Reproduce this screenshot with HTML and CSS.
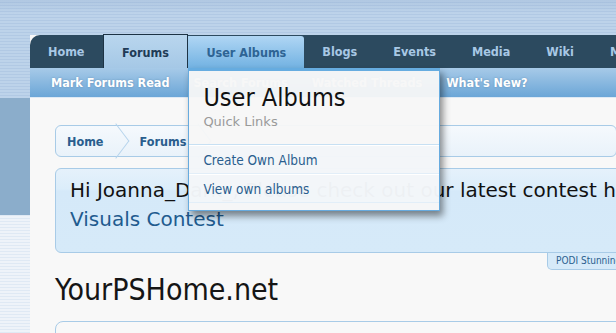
FILE: index.html
```html
<!DOCTYPE html>
<html lang="en">
<head>
  <meta charset="UTF-8">
  <title>YourPSHome.net</title>
  <link rel="stylesheet" href="styles.css">
</head>
<body>
  <div class="page">
    <!-- main navigation -->
    <nav class="nav-tabs">
      <a href="#" class="tab">Home</a>
      <a href="#" class="tab tab-selected">Forums</a>
      <div class="tab tab-hover">
        <a href="#" class="tab-link">User Albums</a>
        <div class="menu">
          <div class="menu-head">
            <h3>User Albums</h3>
            <p>Quick Links</p>
          </div>
          <ul class="menu-list">
            <li><a href="#">Create Own Album</a></li>
            <li><a href="#">View own albums</a></li>
          </ul>
        </div>
      </div>
      <a href="#" class="tab">Blogs</a>
      <a href="#" class="tab">Events</a>
      <a href="#" class="tab">Media</a>
      <a href="#" class="tab">Wiki</a>
      <a href="#" class="tab">Members</a>
    </nav>

    <div class="sub-nav">
      <a href="#">Mark Forums Read</a>
      <a href="#">Search Forums</a>
      <a href="#">Watched Threads</a>
      <a href="#">What's New?</a>
    </div>

    <div class="content">
      <div class="breadcrumb">
        <a href="#" class="crumb">Home</a>
        <span class="crumb-arrow"></span>
        <a href="#" class="crumb">Forums</a>
        <span class="crumb-arrow"></span>
      </div>

      <div class="notice">
        <p>Hi Joanna_Dark_, Please check out our latest contest here</p>
        <a href="#">Visuals Contest</a>
      </div>
      <div class="notice-tab">PODI Stunning Visuals Contest</div>

      <h1 class="site-title">YourPSHome.net</h1>

      <div class="node-box"></div>
    </div>
  </div>
</body>
</html>
```

FILE: styles.css
```css
/* page */
body {
  margin: 0;
  height: 333px;
  overflow: hidden;
  font-family: "DejaVu Sans", Verdana, sans-serif;
  font-stretch: condensed;
  background:
    linear-gradient(#8badcb, #8badcb) no-repeat 0 98px / 30px 117px,
    repeating-linear-gradient(#dfe9f4 0 1px, #eef3f9 1px 3px) no-repeat 0 215px / 30px 200px,
    linear-gradient(rgba(120, 150, 190, 0.18), rgba(120, 150, 190, 0) 14px),
    repeating-linear-gradient(#bdd3ea 0 2px, #b1c9e4 2px 3px);
}

a {
  text-decoration: none;
}

.page {
  margin: 35px 0 0 30px;
  width: 1000px;
  background-color: #f8f8f8;
  min-height: 400px;
}

/* top tabs */
.nav-tabs {
  display: flex;
  height: 33px;
  background-color: #2c4a5f;
  border-top-left-radius: 10px;
}

.tab {
  display: flex;
  align-items: center;
  padding: 0 18px;
  font-size: 12.5px;
  font-weight: bold;
  color: #a8c8e5;
  position: relative;
}

.tab-selected {
  color: #1f3b56;
  background: linear-gradient(#b9d6ee, #a5c8e6);
  margin-top: -1px;
  border: 1px solid #1d3345;
  border-bottom: none;
  padding: 1px 18.5px 0;
}

.tab-hover {
  margin-top: 1px;
  background: linear-gradient(#b0d6f4, #72b2e2);
  border-top-right-radius: 3px;
}

.tab-link {
  color: #2e6494;
}

/* dropdown menu */
.menu {
  position: absolute;
  top: 100%;
  left: 0;
  width: 250px;
  height: 139px;
  border: 1px solid #67abdf;
  border-top: 3px solid #66ace0;
  background-color: rgba(247, 247, 247, 0.95);
  box-shadow: 3px 5px 7px rgba(0, 0, 0, 0.45);
  z-index: 10;
  font-weight: normal;
}

.menu-head {
  padding: 12px 14px 0;
  height: 61px;
  border-bottom: 1px solid #c7e0f3;
}

.menu-head h3 {
  margin: 0;
  font-size: 25px;
  font-weight: normal;
  color: #111;
  line-height: 30px;
}

.menu-head p {
  margin: 0;
  font-size: 13px;
  font-stretch: normal;
  color: #9a9a9a;
  line-height: 17px;
}

.menu-list {
  list-style: none;
  margin: 0;
  padding: 0;
  background-color: rgba(240, 246, 252, 0.5);
}

.menu-list li {
  border-top: 1px solid #fff;
  border-bottom: 1px solid #e2eef8;
  height: 27px;
  display: flex;
  align-items: center;
  padding: 0 14px;
}

.menu-list a {
  font-size: 13.5px;
  color: #2a5e8e;
}

/* secondary bar */
.sub-nav {
  display: flex;
  align-items: center;
  height: 29px;
  padding-left: 9px;
  background: linear-gradient(#a7cae8, #6ba6d7);
  border-bottom: 1px solid #dde9f4;
}

.sub-nav a {
  color: #fff;
  font-size: 12.5px;
  font-weight: bold;
  padding: 0 12px;
  text-shadow: 0 0 2px rgba(40, 80, 120, 0.4);
}

/* content */
.content {
  padding: 27px 25px 0;
}

.breadcrumb {
  display: flex;
  align-items: center;
  height: 30px;
  width: 560px;
  border: 1px solid #a8cbe7;
  border-radius: 6px;
  background: linear-gradient(#f5f9fd, #e9f2fa);
}

.crumb {
  font-size: 12.5px;
  font-weight: bold;
  color: #2a5e8e;
  padding: 0 11px;
}

.crumb-arrow {
  width: 21px;
  height: 21px;
  border-top: 1px solid #b6d4ec;
  border-right: 1px solid #b6d4ec;
  transform: rotate(45deg) skew(8deg, 8deg);
  margin: 0 2px 0 -10px;
}

.notice {
  margin-top: 11px;
  height: 69px;
  padding: 7px 14px;
  border: 1px solid #a8cbe7;
  border-radius: 6px;
  background: linear-gradient(#e5f1fb, #dbedfa 20px, #d5e9f9 22px, #d6eaf9);
}

.notice p {
  margin: 0;
  font-size: 20px;
  font-stretch: normal;
  line-height: 29px;
  color: #111;
  white-space: nowrap;
}

.notice a {
  font-size: 20px;
  font-stretch: normal;
  line-height: 29px;
  color: #1f5b8f;
}

.notice-tab {
  margin-left: 492px;
  width: 200px;
  height: 16px;
  padding-left: 8px;
  font-size: 10px;
  line-height: 16px;
  color: #2a5e8e;
  background-color: #d6eaf9;
  border: 1px solid #a8cbe7;
  border-top: none;
  border-bottom-left-radius: 5px;
  white-space: nowrap;
}

.site-title {
  margin: 0;
  font-size: 30px;
  font-weight: normal;
  color: #151515;
  line-height: 40px;
}

.node-box {
  margin-top: 11px;
  height: 60px;
  border: 1px solid #a8cbe7;
  border-radius: 8px;
  background-color: #f8f8f8;
}
```
